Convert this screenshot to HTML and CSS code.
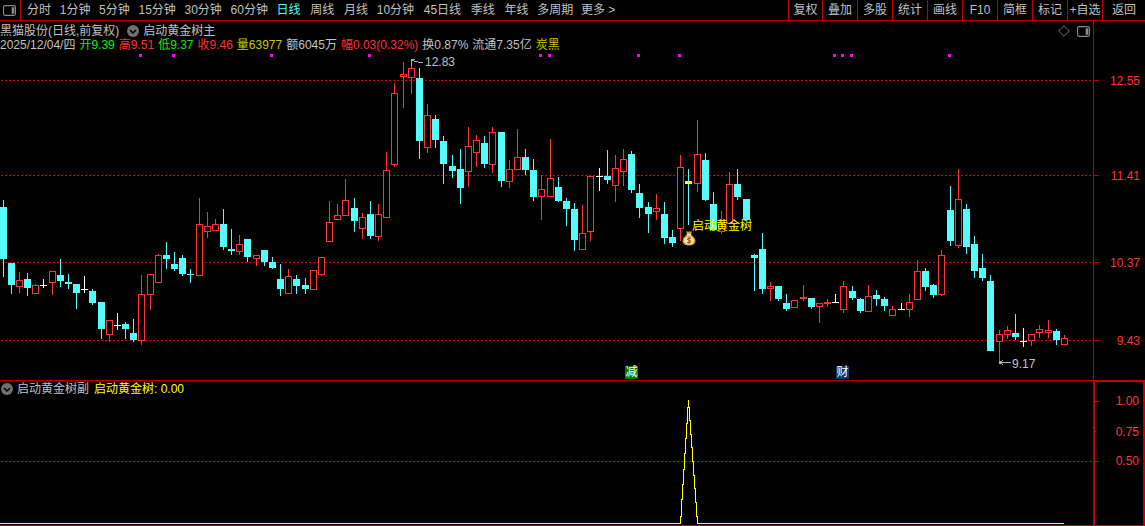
FILE: index.html
```html
<!DOCTYPE html>
<html lang="zh-CN">
<head>
<meta charset="utf-8">
<title>黑猫股份 日线</title>
<link rel="stylesheet" href="styles.css">
</head>
<body>
<div class="app">
  <header class="toolbar">
    <div class="toggle">
      <svg class="panel-icon" viewBox="0 0 12 10"><rect x="0.5" y="0.5" width="11" height="9" rx="1.5"/><rect class="panel-fill" x="8" y="2" width="2.5" height="6"/></svg>
    </div>
    <nav class="periods">
      <span>分时</span><span>1分钟</span><span>5分钟</span><span>15分钟</span><span>30分钟</span><span>60分钟</span><span class="active">日线</span><span class="roomy">周线</span><span class="roomy">月线</span><span>10分钟</span><span class="roomy">45日线</span><span class="roomy">季线</span><span class="roomy">年线</span><span>多周期</span><span class="tight">更多 &gt;</span>
    </nav>
    <nav class="tools">
      <span>复权</span><span>叠加</span><span>多股</span><span>统计</span><span>画线</span><span>F10</span><span>简框</span><span>标记</span><span>+自选</span><span class="back">返回</span>
    </nav>
  </header>

  <section class="pane main-pane">
    <div class="plot">
      <svg id="candles" class="chart" viewBox="0 21 1093 359" preserveAspectRatio="none">
        <path id="main-grid" class="grid-dots" d=""/>
        <g class="dots">
          <rect x="139" y="54" width="3" height="3"/><rect x="172" y="54" width="3" height="3"/><rect x="270" y="54" width="3" height="3"/><rect x="368" y="54" width="3" height="3"/><rect x="539" y="54" width="3" height="3"/><rect x="548" y="54" width="3" height="3"/><rect x="637" y="54" width="3" height="3"/><rect x="678" y="54" width="3" height="3"/><rect x="833" y="54" width="3" height="3"/><rect x="841" y="54" width="3" height="3"/><rect x="850" y="54" width="3" height="3"/><rect x="948" y="54" width="3" height="3"/>
        </g>
        <g id="series"></g>
        <path class="pointer" d="M411.5 66V59.5H415M412 60.5L416 61.5L423 63"/>
        <path class="pointer" d="M1011 362.5H1000M1003 360L1000 362.5L1003 365"/>
        <rect class="pointer-fill" x="999" y="361" width="2" height="3"/>
      </svg>
      <div class="info">
        <div class="title-row">
          <span>黑猫股份(日线,前复权)</span>
          <svg class="chevron" viewBox="0 0 12 12"><circle cx="6" cy="6" r="6"/><path d="M3 5L6 8L9 5"/></svg>
          <span>启动黄金树主</span>
        </div>
        <div class="quote-row">
          <span>2025/12/04/四</span>
          <span class="green">开9.39</span>
          <span class="red">高9.51</span>
          <span class="green">低9.37</span>
          <span class="red">收9.46</span>
          <span class="olive">量63977</span>
          <span>额6045万</span>
          <span class="red">幅0.03(0.32%)</span>
          <span>换0.87%</span>
          <span>流通7.35亿</span>
          <span class="olive">炭黑</span>
        </div>
      </div>
      <div class="corner-icons">
        <svg class="diamond" viewBox="0 0 12 12"><path d="M6 0.7L11.3 6L6 11.3L0.7 6Z"/></svg>
        <svg class="panel-icon" viewBox="0 0 12 10"><rect x="0.5" y="0.5" width="11" height="9" rx="1.5"/><rect class="panel-fill" x="8" y="2" width="2.5" height="6"/></svg>
      </div>
      <span class="note high">12.83</span>
      <span class="note low">9.17</span>
      <span class="signal">启动黄金树</span>
      <svg class="bag" viewBox="0 0 14 16">
        <path class="bag-body" d="M4 1.5H10L8.8 4.5C11.5 6 13.5 8.5 13.5 11C13.5 14.2 10.5 15.5 7 15.5C3.5 15.5 0.5 14.2 0.5 11C0.5 8.5 2.5 6 5.2 4.5Z"/>
        <ellipse class="bag-light" cx="7" cy="10.5" rx="5" ry="4"/>
        <path class="bag-tie" d="M4.8 4.6H9.2"/>
        <path class="bag-sign" d="M9 8.2H6L5.4 9.5L8.8 11L8.2 12.6H5M7 7V13.6"/>
      </svg>
      <span class="tag tag-green">减</span>
      <span class="tag tag-blue">财</span>
    </div>
    <aside class="axis main-axis">
      <span class="tick t1">12.55</span>
      <span class="tick t2">11.41</span>
      <span class="tick t3">10.37</span>
      <span class="tick t4">9.43</span>
    </aside>
  </section>

  <section class="pane sub-pane">
    <div class="plot">
      <svg class="chart" viewBox="0 382 1093 143" preserveAspectRatio="none">
        <path id="sub-grid" class="grid-dots" d=""/>
        <path class="peak" d="M0 523.5H680.5V517H681.5V500H682.5V485H683.5V470H684.5V454H685.5V439H686.5V424H687.5V408H688.5V400.5V408H689.5V421H690.5V435H691.5V448H692.5V462H693.5V476H694.5V489H695.5V503H696.5V517H697.5V523.5H1064"/>
      </svg>
      <div class="sub-title">
        <svg class="chevron" viewBox="0 0 12 12"><circle cx="6" cy="6" r="6"/><path d="M3 5L6 8L9 5"/></svg>
        <span>启动黄金树副</span>
        <span class="yellow">启动黄金树: 0.00</span>
      </div>
    </div>
    <aside class="axis sub-axis">
      <span class="tick s1">1.00</span>
      <span class="tick s2">0.75</span>
      <span class="tick s3">0.50</span>
    </aside>
  </section>
</div>
<script src="chart.js"></script>
</body>
</html>
```
FILE: styles.css
```css
* { box-sizing: border-box; }
html, body { margin: 0; height: 100%; background: #000; overflow: hidden; }
body {
  font-family: "Liberation Sans", "Noto Sans CJK SC", sans-serif;
  font-size: 12px;
  line-height: 14px;
  color: #c0c0c0;
}
.app { display: flex; flex-direction: column; width: 1145px; height: 526px; }

/* toolbar */
.toolbar { display: flex; align-items: stretch; height: 21px; border-bottom: 1px solid #c00000; flex: none; }
.toggle { width: 21px; display: flex; align-items: center; justify-content: center; border-right: 1px solid #c00000; padding-right: 2px; }
.periods { display: flex; align-items: center; gap: 8.7px; padding-left: 6px; white-space: nowrap; }
.periods .active { color: #54fcfc; }
.periods .roomy { margin-left: 1px; }
.periods .tight { margin-left: -1px; }
.tools { display: flex; margin-left: auto; }
.tools span { width: 35px; display: flex; align-items: center; justify-content: center; border-left: 1px solid #c00000; white-space: nowrap; }
.tools span:first-child { width: 34px; }
.tools .back { width: 43px; }

.panel-icon { width: 13px; height: 11px; }
.panel-icon rect { fill: none; stroke: #8a8a8a; }
.panel-icon .panel-fill { fill: #8a8a8a; stroke: none; }

/* panes */
.pane { display: flex; position: relative; }
.main-pane { height: 360px; border-bottom: 1px solid #c00000; flex: none; }
.sub-pane { flex: 1; border-bottom: 1px solid #c00000; }
.plot { position: relative; flex: 1; min-width: 0; }
.chart { display: block; width: 100%; height: 100%; shape-rendering: crispEdges; }
.axis { position: relative; flex: none; width: 52px; border-left: 1px solid #c00000; color: #ff3232; }
.sub-axis { border: 2px solid #c00000; border-bottom: 0; border-top-width: 1px; }

.tick { position: absolute; left: 0; right: 5px; line-height: 14px; text-align: right; }
.tick::before { content: ""; position: absolute; left: 0; top: 6px; width: 5px; height: 1px; background: #c00000; }
.t1 { top: 53px; }
.t2 { top: 148px; }
.t3 { top: 235px; }
.t4 { top: 313px; }
.sub-axis .tick { right: 4px; }
.s1 { top: 12px; }
.s2 { top: 43px; }
.s3 { top: 72px; }
.s1::before { top: 7px; width: 4px; }
.s2::before { width: 1px; }
.s3::before { top: 7px; width: 4px; }

/* chart ink */
.grid-dots { fill: #c80000; }
.dots rect { fill: #ff00ff; }
.c-wick { stroke: #54fcfc; }
.c-body { fill: #54fcfc; }
.r-wick { stroke: #ff3232; }
.r-body { fill: #000; stroke: #ff3232; }
.w-wick { stroke: #fff; }
.w-body { fill: #fff; }
.y-body { fill: #ffff00; }
.pointer { fill: none; stroke: #b0b0b0; }
.pointer-fill { fill: #b0b0b0; }
.peak { fill: none; stroke: #ffff00; }

/* info overlays */
.info { position: absolute; left: 0; top: 2px; }
.title-row { display: flex; align-items: center; height: 15px; white-space: nowrap; }
.title-row .chevron { margin: 0 4px 0 8px; }
.quote-row { display: flex; gap: 4px; height: 15px; align-items: center; white-space: nowrap; margin-top: -1px; }
.chevron { width: 12px; height: 12px; flex: none; }
.chevron circle { fill: #707070; }
.chevron path { fill: none; stroke: #000; stroke-width: 1.5; }
.green { color: #00f000; }
.red { color: #ff3232; }
.olive { color: #c8c800; }
.yellow { color: #ffff00; }

.corner-icons { position: absolute; right: 3px; top: 4px; display: flex; gap: 7px; align-items: center; }
.diamond { width: 12px; height: 12px; }
.diamond path { fill: none; stroke: #707070; }

.note { position: absolute; line-height: 14px; }
.note.high { left: 425px; top: 34px; }
.note.low { left: 1012px; top: 336px; }
.signal { position: absolute; left: 692px; top: 198px; color: #ffff00; white-space: nowrap; }
.bag { position: absolute; left: 682px; top: 209px; width: 14px; height: 16px; }
.bag-body { fill: #d99a2b; }
.bag-light { fill: #f9e3a8; }
.bag-tie { fill: none; stroke: #fff3c8; stroke-width: 1.5; }
.bag-sign { fill: none; stroke: #8a4a1a; shape-rendering: geometricPrecision; }

.tag { position: absolute; top: 345px; width: 13px; height: 13px; color: #fff; line-height: 13px; text-align: center; }
.tag-green { left: 625px; background: #008000; }
.tag-blue { left: 836px; background: #003c78; }

.sub-title { position: absolute; left: 1px; top: 1px; height: 14px; display: flex; align-items: center; white-space: nowrap; }
.sub-title .chevron { margin-right: 4px; }
.sub-title .yellow { margin-left: 5px; }
```
FILE: chart.js
```js
// [centre x, high, low, body top, body bottom, kind]  c=falling r=rising w=doji y=marked
var data = [
[3,200,277,207,259,'c'],[11,263,294,263,285,'c'],[19,272,293,280,287,'r'],[27,273,296,279,288,'c'],
[35,284,294,285,294,'r'],[43,279,288,285,285,'w'],[52,271,295,271,283,'r'],[60,259,287,275,281,'c'],
[68,274,289,282,284,'c'],[76,284,309,284,293,'c'],[84,276,293,289,289,'w'],[92,289,305,291,303,'c'],
[101,302,339,302,329,'c'],[109,320,342,320,335,'r'],[117,313,330,325,325,'w'],[125,322,339,324,329,'c'],
[133,319,342,333,340,'c'],[141,275,345,294,341,'r'],[150,274,310,274,295,'r'],[158,254,283,255,283,'r'],
[166,242,269,255,259,'c'],[174,252,271,264,269,'c'],[182,255,276,258,274,'c'],[190,269,283,274,274,'x'],
[199,198,276,224,276,'r'],[207,212,238,226,232,'r'],[215,219,231,224,231,'r'],[223,209,250,224,247,'c'],
[231,229,255,249,251,'c'],[239,235,255,244,252,'r'],[247,239,262,239,257,'c'],[256,255,266,255,259,'r'],
[264,250,266,250,262,'c'],[272,257,269,262,268,'c'],[280,264,296,279,289,'c'],[288,269,294,276,294,'r'],
[296,275,294,279,286,'c'],[305,278,294,285,289,'c'],[313,270,290,270,290,'r'],[321,257,276,257,275,'r'],
[329,201,242,222,242,'r'],[337,204,220,215,220,'r'],[345,179,216,200,216,'r'],[354,198,232,208,221,'c'],
[362,213,239,217,229,'r'],[370,201,239,214,236,'c'],[378,204,241,214,237,'r'],[386,152,218,170,218,'r'],
[394,83,167,93,165,'r'],[403,62,108,74,77,'r'],[411,60,94,68,78,'r'],[419,68,159,78,141,'c'],
[427,104,153,115,148,'r'],[435,115,148,119,140,'c'],[443,136,184,141,164,'c'],[452,155,178,166,171,'c'],
[460,149,204,169,188,'c'],[468,127,187,146,172,'r'],[476,135,167,140,153,'r'],[484,136,168,143,164,'c'],
[492,127,173,132,165,'r'],[501,132,187,132,181,'c'],[509,160,188,169,182,'r'],[517,129,170,157,170,'r'],
[525,149,175,157,170,'c'],[533,159,201,170,197,'c'],[541,175,220,189,197,'r'],[550,139,197,178,197,'r'],
[558,177,202,187,201,'c'],[566,198,226,201,209,'c'],[574,203,251,209,240,'c'],[582,205,250,233,250,'r'],
[590,176,241,176,232,'r'],[599,168,191,176,176,'w'],[607,150,184,176,180,'c'],[615,155,202,168,186,'r'],
[623,149,186,159,172,'r'],[631,151,193,154,190,'c'],[639,184,218,193,208,'c'],[648,202,233,207,214,'c'],
[656,194,220,208,212,'r'],[664,202,244,214,238,'c'],[672,230,247,237,243,'c'],[680,155,241,167,229,'r'],
[688,169,225,181,184,'y'],[697,120,192,154,184,'r'],[705,153,201,160,200,'c'],[713,192,230,204,230,'c'],
[721,211,234,223,232,'r'],[729,172,224,184,224,'r'],[737,169,200,184,197,'c'],[746,199,220,199,220,'c'],
[754,254,291,255,258,'c'],[762,233,294,249,289,'c'],[770,282,301,286,289,'r'],[778,286,301,286,299,'c'],
[786,294,311,303,309,'c'],[794,300,308,300,308,'r'],[803,285,301,297,299,'r'],[811,298,309,298,307,'c'],
[819,303,323,303,307,'r'],[827,299,307,302,304,'r'],[835,294,303,302,302,'w'],[843,281,313,286,310,'r'],
[852,286,300,291,298,'c'],[860,298,313,299,311,'c'],[868,285,312,296,312,'r'],[876,290,306,295,299,'c'],
[884,297,311,299,306,'c'],[892,306,316,309,316,'r'],[901,303,310,309,309,'w'],[909,294,317,302,310,'r'],
[917,260,300,271,300,'r'],[925,268,291,271,287,'c'],[933,284,298,285,295,'c'],[941,250,296,255,295,'r'],
[950,186,246,210,241,'c'],[958,169,248,199,246,'r'],[966,204,254,209,247,'c'],[974,236,278,244,271,'c'],
[982,254,281,268,278,'c'],[990,275,351,281,351,'c'],[999,330,362,334,342,'r'],[1007,326,339,330,335,'r'],
[1015,314,340,333,337,'c'],[1023,328,347,341,341,'w'],[1031,334,346,334,341,'r'],[1039,325,338,329,333,'r'],
[1048,320,338,330,333,'r'],[1056,329,345,331,340,'c'],[1064,335,345,338,345,'r']
];

var NS = 'http://www.w3.org/2000/svg';
var series = document.getElementById('series');

function add(tag, cls, attrs) {
  var el = document.createElementNS(NS, tag);
  el.setAttribute('class', cls);
  for (var k in attrs) el.setAttribute(k, attrs[k]);
  series.appendChild(el);
}

// dotted price levels: two pixels in every four
function dottedRows(rows) {
  var d = '';
  rows.forEach(function (y) {
    for (var x = 1; x < 1091; x += 4) d += 'M' + x + ' ' + y + 'h2v1h-2z';
  });
  return d;
}
document.getElementById('main-grid').setAttribute('d', dottedRows([80, 175, 262, 340]));
document.getElementById('sub-grid').setAttribute('d', dottedRows([461]));

data.forEach(function (d) {
  var x = d[0], hi = d[1], lo = d[2], top = d[3], bot = d[4], kind = d[5];
  var wick = kind === 'r' ? 'r-wick' : kind === 'w' ? 'w-wick' : 'c-wick';
  add('line', wick, { x1: x + 0.5, x2: x + 0.5, y1: hi, y2: lo });
  if (kind === 'r') {
    add('rect', 'r-body', { x: x - 2.5, y: top + 0.5, width: 6, height: Math.max(bot - top - 1, 1) });
  } else {
    var cls = kind === 'w' ? 'w-body' : kind === 'y' ? 'y-body' : 'c-body';
    add('rect', cls, { x: x - 3, y: top, width: 7, height: Math.max(bot - top, 1) });
  }
});
```
